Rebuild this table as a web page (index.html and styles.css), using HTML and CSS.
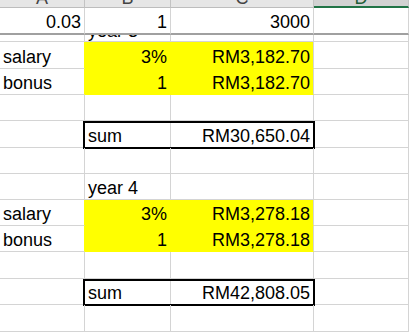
FILE: index.html
```html
<!DOCTYPE html>
<html>
<head>
<meta charset="utf-8">
<link rel="stylesheet" href="styles.css">
</head>
<body>
<div class="sheet">
  <div class="row hdr">
    <div class="h"><span>A</span></div>
    <div class="h"><span>B</span></div>
    <div class="h"><span>C</span></div>
    <div class="h sel"><span>D</span></div>
  </div>
  <div class="row r1 frozen">
    <div class="c r">0.03</div>
    <div class="c r">1</div>
    <div class="c r">3000</div>
    <div class="c"></div>
  </div>
  <div class="row partial">
    <div class="c"></div>
    <div class="c">year 3</div>
    <div class="c"></div>
    <div class="c"></div>
  </div>
  <div class="row h27">
    <div class="c ya">salary</div>
    <div class="c r y yb">3%</div>
    <div class="c r y">RM3,182.70</div>
    <div class="c"></div>
  </div>
  <div class="row h26">
    <div class="c ya">bonus</div>
    <div class="c r y yb">1</div>
    <div class="c r y">RM3,182.70</div>
    <div class="c"></div>
  </div>
  <div class="row h26">
    <div class="c"></div><div class="c"></div><div class="c"></div><div class="c"></div>
  </div>
  <div class="row h27">
    <div class="c"></div>
    <div class="c">sum</div>
    <div class="c r">RM30,650.04</div>
    <div class="c"></div>
    <div class="box"></div>
  </div>
  <div class="row h26">
    <div class="c"></div><div class="c"></div><div class="c"></div><div class="c"></div>
  </div>
  <div class="row h26">
    <div class="c"></div>
    <div class="c">year 4</div>
    <div class="c"></div>
    <div class="c"></div>
  </div>
  <div class="row h26">
    <div class="c ya">salary</div>
    <div class="c r y yb">3%</div>
    <div class="c r y">RM3,278.18</div>
    <div class="c"></div>
  </div>
  <div class="row h26">
    <div class="c ya">bonus</div>
    <div class="c r y yb">1</div>
    <div class="c r y">RM3,278.18</div>
    <div class="c"></div>
  </div>
  <div class="row h27">
    <div class="c"></div><div class="c"></div><div class="c"></div><div class="c"></div>
  </div>
  <div class="row h26">
    <div class="c"></div>
    <div class="c">sum</div>
    <div class="c r">RM42,808.05</div>
    <div class="c"></div>
    <div class="box"></div>
  </div>
  <div class="row h27">
    <div class="c"></div><div class="c"></div><div class="c"></div><div class="c"></div>
  </div>
</div>
</body>
</html>
```
FILE: styles.css
```css
* { box-sizing: border-box; }
html, body { margin: 0; padding: 0; background: #fff; }
body {
  width: 409px;
  height: 332px;
  overflow: hidden;
  font-family: "Liberation Sans", Arial, sans-serif;
  font-size: 18px;
  color: #000;
}
.sheet { display: flex; flex-direction: column; }
.row {
  display: grid;
  grid-template-columns: 85px 86px 143px 95px;
}
.row > * { grid-row: 1; }
.row > :nth-child(1) { grid-column: 1; }
.row > :nth-child(2) { grid-column: 2; }
.row > :nth-child(3) { grid-column: 3; }
.row > :nth-child(4) { grid-column: 4; }
.row > .box { grid-column: 2 / 4; }
.hdr { height: 8px; }
.r1 { height: 27px; }
.partial { height: 7px; }
.h26 { height: 26px; }
.h27 { height: 27px; }

.h {
  background: #e6e6e6;
  border-right: 1px solid #c3c3c3;
  border-bottom: 1px solid #bdbdbd;
  overflow: hidden;
  display: flex;
  justify-content: center;
  align-items: flex-start;
  color: #444;
}
.h span { display: block; line-height: 18px; margin-top: -11px; }
.h.sel {
  background: #d2d2d2;
  border-bottom: 2px solid #217346;
  color: #1e5e38;
}

.c {
  border-right: 1px solid #d4d4d4;
  border-bottom: 1px solid #d4d4d4;
  display: flex;
  align-items: flex-end;
  padding: 0 3px 2px;
  line-height: 18px;
  white-space: nowrap;
  overflow: hidden;
}
.c.r { justify-content: flex-end; }
.frozen .c { border-bottom: 2px solid #a0a0a0; }
.partial .c { padding-bottom: 1px; }

.y { background: #ffff00; border-bottom-color: #ffff00; }
.yb { border-right-color: #ffff00; }
.ya { border-right-color: #ffff00; }

.box {
  border: 2px solid #000;
  margin: 0 -1px -1px -2px;
  pointer-events: none;
}
```
